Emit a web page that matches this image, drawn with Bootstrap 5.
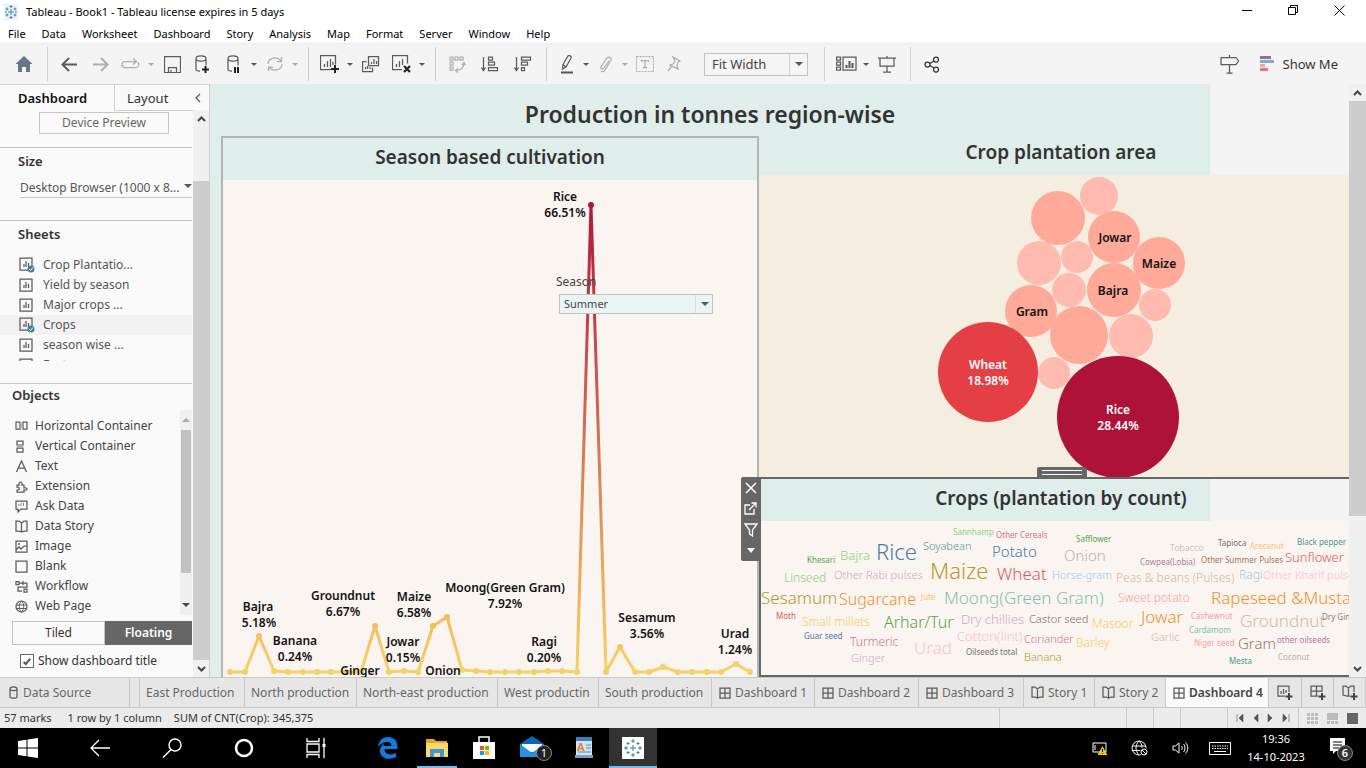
<!DOCTYPE html>
<html lang="en">
<head>
<meta charset="utf-8">
<meta name="viewport" content="width=device-width, initial-scale=1">
<title>Tableau - Book1</title>
<link href="https://cdn.jsdelivr.net/npm/bootstrap@5.3.0/dist/css/bootstrap.min.css" rel="stylesheet">
<style>
body{font-family:"Noto Sans","Open Sans",sans-serif;font-size:12px;line-height:16px;color:#333;background:#fff;overflow:hidden}
body > *{flex-shrink:0}
button{font:inherit;color:inherit;background:none;border:0;padding:0}
svg{display:block;flex:none}
.ln{fill:none;stroke:#5b5b5b;stroke-width:1.25}
.dim{opacity:.45}
.titlebar{height:24px;color:#000;font-size:11px}
.win-btn{width:46px;height:20px;display:grid;place-items:center;margin-bottom:4px}
.menubar{height:19px;font-size:11px;gap:16px;padding-left:8px}
.menubar a{color:#000;text-decoration:none}
/* toolbar */
.toolbar{height:41px;background:#f4f4f4;border-top:1px solid #ececec}
.tgroup{display:flex;align-items:center;gap:7px;height:34px;padding:0 11px 0 9px;border-right:1px solid #cfcfcf}
.tgroup:first-child{padding-left:12px}
.tgroup.last-group{border:0}
.tgroup.wide{gap:9px}
.tgroup button{width:24px;height:24px;display:grid;place-items:center}
.tgroup.snug button{width:22px}
.tgroup button.drop{width:8px;margin:0 -2px 0 -3px}
.drop::before,.arrow::before{content:"";border:3px solid transparent;border-top-color:#555;border-bottom:0}
.arrow::before{border-width:4px 4px 0}
.pick{appearance:none;border:1px solid #c3c3c3;background:#f5f5f5;border-radius:0;color:#444;outline:0}
.arrow{position:absolute;right:0;top:1px;bottom:1px;display:grid;place-items:center;pointer-events:none}
.fit{width:104px;height:23px;font-size:13px;padding:0 7px}
.fit + .arrow{width:19px;border-left:1px solid #d5d5d5}
/* side pane */
main{flex:1 1 0!important;min-height:0}
.side{width:210px;background:#fafafa;border-right:1px solid #cfcfcf;flex:none}
.side .sbar{margin-left:1px}
.side-tabs{height:26px;font-size:13px;border-top:1px solid #d4d4d4}
.side-tabs button{height:26px}
.tab-dash{width:114px;font-weight:600;color:#111;text-align:left}
.side-tabs .tab-dash{padding-left:18px}
.side-tabs .tab-lay{border-left:1px solid #cfcfcf;border-bottom:1px solid #cfcfcf;padding:0 8px 0 12px}
.sec{border-bottom:1px solid #c6c6c6}
.sec-head{font-size:13px;font-weight:600;margin:0;padding-left:18px;line-height:18px}
.size-sec{padding-bottom:22px}
.obj-head{padding:2px 0 6px 12px}
.preview{height:22px;width:130px;margin:2px 0 13px 39px;border:1px solid #c6c6c6;color:#666}
.size-pick{width:100%;height:20px;border:0;border-bottom:1px solid #c6c6c6;background:none;padding:0;color:#555;font-size:12px}
.sheets{height:110px;overflow:hidden;margin-bottom:22px}
.sheets li,.objs li{height:20px;display:flex;align-items:center;color:#555;font-size:12px}
.sheets li{padding-left:19px;gap:8px}
.sheets li.on{background:#f2f2f2}
.objs{height:205px;padding-top:6px}
.objs li{padding-left:15px;gap:6px;color:#444}
.inner-bar{width:12px;background:#f0f0f0}
.inner-thumb{height:143px;width:10px;background:#c1c1c1}
.tri-up{border:4px solid transparent;border-bottom-color:#aaa;border-top:0}
.tri-dn{border:4px solid transparent;border-top-color:#444;border-bottom:0}
.mode{height:24px;padding-left:12px;margin-top:6px}
.mode button:first-child{width:93px;border:1px solid #c3c3c3}
.mode button:last-child{background:#666;color:#fff;font-weight:600}
.tick{appearance:none;width:14px;height:14px;border:1px solid #666;background:#fff;margin:0;display:grid;place-items:center}
.tick:checked::before{content:"";width:4px;height:8px;border:solid #555;border-width:0 2px 2px 0;transform:rotate(40deg)}
.sbar{width:16px;background:#f0f0f0;flex:none}
.stage-bar{width:17px}
.stage-bar .thumb{height:70%}
.side .thumb{margin-top:54px}
.sbar .end{height:17px;display:grid;place-items:center}
.sbar .thumb{background:#cdcdcd}
/* dashboard canvas */
.stage{background:#f4f4f4;min-width:0}
.sheet-back{position:absolute;inset:0 auto 0 0;width:1000px;background:#dfeeea}
.big-title{width:1000px;height:52px;line-height:60px;font-size:23px;font-weight:600;margin:0;text-align:center}
.view-title{font-size:19px;font-weight:600;margin:0;text-align:center;line-height:38px;height:42px}
.left-view{width:538px;margin-left:11px;border:2px solid #aeb7b5;border-bottom:0;flex:none}
.right-col{min-width:0}
.right-in{width:604px}
.area-title{height:39px;line-height:32px}
.area-plot{background:#f6ede1}
.count-view{border:2px solid #666;height:200px}
.plot{background:#faf5f1}
.season{position:absolute;left:333px;top:136px;width:157px}
.season label{color:#444;height:20px}
.season-field{margin-left:3px}
.season-pick{width:154px;height:20px;font-size:11px;padding:0 4px;background:#e9f4f4}
.season .arrow{width:18px;border-left:1px solid #dcdcdc}
.tools{position:absolute;left:531px;top:393px;width:20px;background:#666;border-radius:2px}
.tools button{width:19px;height:21px;display:grid;place-items:center}
.grip{position:absolute;left:276px;bottom:100%;width:50px;height:12px;background:#666;border-radius:2px 2px 0 0;display:grid;place-items:center}
.mk{font-size:12px;font-weight:600;fill:#111;text-anchor:middle}
.cloud text{font-weight:300}
.s13{font-size:13px}
.cloud .s8{font-size:8px;font-weight:400}.s9{font-size:9px}.s11{font-size:11px}.s12{font-size:12px}.s15{font-size:15px}.s16{font-size:16px}.s17{font-size:17px}.s22{font-size:22px}
/* sheet tabs */
.tabs{height:31px;display:grid;grid-template-columns:130fr 10fr 105fr 112fr 141fr 101fr 113fr 103fr 104fr 105fr 71fr 71fr 103fr 33fr 32fr 32fr;background:#e6e6e6;border-top:1px solid #c9c9c9;border-bottom:1px solid #c9c9c9}
.tabs button{border-right:1px solid #c9c9c9;color:#666;white-space:nowrap;display:flex;align-items:center;gap:4px;padding-left:7px;overflow:hidden;min-width:0}
.tabs button.current{background:#fafafa;color:#444;font-weight:600}
.status{height:20px;font-size:11px;background:#ebebeb}
.cell{border-left:1px solid #c9c9c9;height:20px;display:flex;align-items:center;width:27px}
.c-info{width:127px}.c-gap{width:47px}.c-nav{width:71px}.c-view{width:68px}
/* taskbar */
.task{height:40px;background:#000;color:#fff}
.task button{height:40px;display:grid;place-items:center}
.w-start{width:56px;margin-right:8px}
.w-sys{width:72px}
.w-app{width:48px;position:relative;margin-right:1px}
.live::after{content:"";position:absolute;left:4px;right:4px;bottom:0;height:2px;background:#76b9ed}
.task .front{background:#333}
.front::after{left:0;right:0}
.w-tray{width:40px}
.clock{font-size:11px;width:72px;text-align:center;line-height:18px}
</style>
</head>
<body class="d-flex flex-column vh-100">
<header class="titlebar d-flex align-items-center">
  <svg class="ms-1" width="14" height="16" viewBox="0 0 14 16"><path d="M0 0h14v16H0z" fill="#eef2f5"/><path d="M7 5v6M4 8h6M7 1v3M5.500 2.500h3M7 12v3M5.500 13.500h3M1 8h2M11 8h2M3 3.500v3M1.500 5h3M11 3.500v3M9.500 5h3M3 9.500v3M1.500 11h3M11 9.500v3M9.500 11h3" stroke="#3d87b8" fill="none"/></svg>
  <span class="ms-1 ps-1 me-auto">Tableau - Book1 - Tableau license expires in 5 days</span>
  <button class="win-btn" aria-label="Minimize"><svg width="10" height="10"><path d="M0 5.500h10" stroke="#000"/></svg></button>
  <button class="win-btn" aria-label="Restore"><svg width="11" height="11"><path d="M.5 2.500h7v7h-7zM2.500 2.500v-2h7v7h-2" stroke="#000" fill="none"/></svg></button>
  <button class="win-btn me-1" aria-label="Close"><svg width="11" height="11"><path d="M.5.5l10 10M10.500.5l-10 10" stroke="#000"/></svg></button>
</header>
<nav class="menubar d-flex align-items-center">
  <a href="#">File</a><a href="#">Data</a><a href="#">Worksheet</a><a href="#">Dashboard</a><a href="#">Story</a><a href="#">Analysis</a><a href="#">Map</a><a href="#">Format</a><a href="#">Server</a><a href="#">Window</a><a href="#">Help</a>
</nav>
<div class="toolbar d-flex align-items-center" role="toolbar">
  <div class="tgroup"><button aria-label="Home"><svg width="18" height="17"><path d="M9 0l8.500 8H15v8h-4v-5H7v5H3V8H.5z" fill="#67758a"/></svg></button></div>
  <div class="tgroup">
    <button aria-label="Undo"><svg width="17" height="15"><path class="ln" style="stroke-width:2" d="M16 7.500H2M8 1L1.500 7.500 8 14"/></svg></button>
    <button aria-label="Redo" class="dim"><svg width="17" height="15"><path class="ln" style="stroke-width:2" d="M1 7.500h14M9 1l6.500 6.500L9 14"/></svg></button>
    <button aria-label="Replay" class="dim"><svg width="20" height="12"><path class="ln" d="M8 3.500H4a3 3 0 0 0 0 6h11a3 3 0 0 0 2-5M7 3.500h8M12 .5l3.500 3-3.500 3"/></svg></button>
    <button class="drop dim" aria-label="Replay options"></button>
    <button aria-label="Save"><svg width="17" height="17"><path class="ln" d="M.5.5h16v16H.5zM4.500 16v-4.500h8V16M7 16v-2"/></svg></button>
    <button aria-label="New data source"><svg width="18" height="19"><path class="ln" d="M2 3.500c0-3.500 10-3.500 10 0s-10 3.500-10 0v11c0 1 2 1.500 4 1.500M12 3.500v7"/><path d="M11.500 11v7M8 14.500h7" stroke="#222" stroke-width="2"/></svg></button>
    <button aria-label="Pause updates"><svg width="18" height="19"><path class="ln" d="M3 3.500c0-3.500 10-3.500 10 0s-10 3.500-10 0v11c0 1 2 1.500 4 1.500M13 3.500v7"/><path d="M10 12v6M13 12v6" stroke="#222" stroke-width="2"/></svg></button>
    <button class="drop" aria-label="Pause options"></button>
    <button aria-label="Run update" class="dim"><svg width="18" height="16"><path class="ln" d="M2 8a7 6.500 0 0 1 13-3M16 8a7 6.500 0 0 1-13 3M15.500 1v4.500H11M2.500 15v-4H7"/></svg></button>
    <button class="drop dim" aria-label="Update options"></button>
  </div>
  <div class="tgroup">
    <button aria-label="New worksheet"><svg width="20" height="19"><path class="ln" d="M11 14.500H.5V.5h15v9M4.500 12V9M7.500 12V6M10.500 12V4M13 10V7"/><path d="M15 10v8M11 14h8" stroke="#222" stroke-width="2"/></svg></button>
    <button class="drop" aria-label="New options"></button>
    <button aria-label="Duplicate"><svg width="18" height="17"><path class="ln" d="M6.500.5h10v9h-10zM4.500 5.500h-4v10h10v-4M9.500 8V6M12 8V3M14.500 8V5M3.500 13v-2M5.500 13v-3M8 13v-2"/></svg></button>
    <button aria-label="Clear sheet"><svg width="20" height="19"><path class="ln" d="M10 14.500H.5V.5h15v8M4.500 12V9M7.500 12V6M10.500 10V4"/><path d="M12 11l6 6M18 11l-6 6" stroke="#222" stroke-width="2.200"/></svg></button>
    <button class="drop" aria-label="Clear options"></button>
  </div>
  <div class="tgroup wide">
    <button aria-label="Swap" class="dim"><svg width="17" height="17"><path class="ln" d="M1 1h3v3H1zM6 1h3v3H6zM11 1h3v3h-3zM1 6h3v3H1zM1 11h3v3H1zM15 7c0 5-3 7-8 7.500M13 9l2-2.500L16.500 9M9 12.500L6.500 14.500 9 16.500"/></svg></button>
    <button aria-label="Sort ascending"><svg width="18" height="16"><path class="ln" d="M2.500 1v13M.5 11.500l2 3 2-3M7.500 1h4v3h-4zM7.500 6h6v3h-6zM7.500 11.500h9v3h-9z"/></svg></button>
    <button aria-label="Sort descending"><svg width="18" height="16"><path class="ln" d="M2.500 1v13M.5 11.500l2 3 2-3M7.500 1h9v3h-9zM7.500 6h6v3h-6zM7.500 11.500h3v3h-3z"/></svg></button>
  </div>
  <div class="tgroup snug pe-3">
    <button aria-label="Highlight"><svg width="14" height="19"><path class="ln" d="M3 9.500l5-8.500c1-1 4 0 3 2L6 12l-3.500 2zM3 9.500L6 12"/><path d="M1 17.500h12" stroke="#555" stroke-width="2"/></svg></button>
    <button class="drop" aria-label="Highlight options"></button>
    <button aria-label="Group" class="dim"><svg width="14" height="17"><path class="ln" d="M10 5l-5 7c-1 2-4 1-3-1l6-9c2-2 5 0 4 2l-6 10c-1 2-3 2-4 1"/></svg></button>
    <button class="drop dim" aria-label="Group options"></button>
    <button aria-label="Mark labels" class="dim"><svg width="18" height="16"><path class="ln" stroke-dasharray="2 1" d="M.5.5h17v15H.5z"/><path class="ln" d="M5.500 6V4.500h7V6M9 4.500v7M7 11.500h4"/></svg></button>
    <button aria-label="Pin" class="dim"><svg width="15" height="16"><path class="ln" d="M6 1l7 4-2 1-1 4 1 3-8-4 3-1 2-3zM5 10l-4 5"/></svg></button>
    <div class="position-relative ms-2 ps-1"><select class="pick fit" aria-label="Fit"><option>Fit Width</option></select><span class="arrow"></span></div>
  </div>
  <div class="tgroup">
    <button aria-label="Show cards"><svg width="21" height="16"><path class="ln" d="M.5 1h4v3h-4zM.5 6h4v3h-4zM.5 11h4v3h-4zM7 1h13v13H7z"/><path d="M10.500 12V9M13.500 12V5M16.500 12V7" stroke="#555" stroke-width="2"/></svg></button>
    <button class="drop" aria-label="Card options"></button>
    <button aria-label="Presentation"><svg width="18" height="17"><path class="ln" d="M0 2h18M2 2v8h14V2M9 0v2M9 10v6M5 16h8"/></svg></button>
  </div>
  <div class="tgroup last-group"><button aria-label="Share"><svg width="16" height="17"><g class="ln" style="stroke:#333"><circle cx="3.500" cy="8.500" r="2.500"/><circle cx="12" cy="3.500" r="2.500"/><circle cx="12" cy="13.500" r="2.500"/><path d="M6 7.500l4-2.500M6 9.500l4 2.500"/></g></svg></button></div>
  <button class="ms-auto me-3" aria-label="Guide"><svg width="20" height="19"><path class="ln" d="M1 2.500h15l2.500 3.500-2.500 3.500H1zM9.500 0v2.500M9.500 10v8M6.500 18h6"/></svg></button>
  <button class="d-flex align-items-center gap-2 me-4 pe-1 ms-1 s13"><svg width="15" height="16"><path fill="#8b6f9c" d="M0 0h11v3H0z"/><path fill="#86a7cf" d="M0 4h14v3H0z"/><path fill="#f1a883" d="M0 8h5v3H0z"/><path fill="#f56c7c" d="M0 12h8v3H0z"/></svg>Show Me</button>
</div>

<main class="d-flex overflow-hidden">
  <aside class="side d-flex flex-column overflow-hidden">
    <div class="side-tabs d-flex flex-shrink-0"><button class="tab-dash">Dashboard</button><button class="tab-lay flex-grow-1 d-flex align-items-center justify-content-between">Layout<svg width="6" height="10"><path class="ln" d="M5 1L1 5l4 4"/></svg></button></div>
    <div class="d-flex flex-grow-1 overflow-hidden">
      <div class="flex-grow-1">
        <div class="sec"><button class="preview">Device Preview</button></div>
        <div class="sec size-sec">
          <h2 class="sec-head pt-1">Size</h2>
          <div class="position-relative ms-3 mt-1 pt-1 ps-1"><select class="pick size-pick" aria-label="Size"><option>Desktop Browser (1000 x 8...</option></select><span class="arrow"></span></div>
        </div>
        <div class="sec">
          <h2 class="sec-head pt-1 pb-1">Sheets</h2>
          <ul class="sheets list-unstyled mt-1 pt-1">
            <li><svg width="16" height="16"><path class="ln" d="M1 1h12v12H1zM5 10V7M7 10V4M9.500 10V6"/><circle cx="12" cy="12" r="3.500" fill="#3b83a6"/><path d="M10 12l1.500 1.500 2.500-3" stroke="#fff" fill="none"/></svg><span>Crop Plantatio...</span></li>
            <li><svg width="16" height="14"><path class="ln" d="M1 1h12v12H1zM5 10V7M7 10V4M9.500 10V6"/></svg><span>Yield by season</span></li>
            <li><svg width="16" height="14"><path class="ln" d="M1 1h12v12H1zM5 10V7M7 10V4M9.500 10V6"/></svg><span>Major crops ...</span></li>
            <li class="on"><svg width="16" height="16"><path class="ln" d="M1 1h12v12H1zM5 10V7M7 10V4M9.500 10V6"/><circle cx="12" cy="12" r="3.500" fill="#3b83a6"/><path d="M10 12l1.500 1.500 2.500-3" stroke="#fff" fill="none"/></svg><span>Crops</span></li>
            <li><svg width="16" height="14"><path class="ln" d="M1 1h12v12H1zM5 10V7M7 10V4M9.500 10V6"/></svg><span>season wise ...</span></li>
            <li><svg width="16" height="14"><path class="ln" d="M1 1h12v12H1zM5 10V7M7 10V4M9.500 10V6"/></svg><span>East area</span></li>
          </ul>
        </div>
        <h2 class="sec-head obj-head">Objects</h2>
        <div class="d-flex">
          <ul class="objs list-unstyled mb-0 flex-grow-1">
            <li><svg width="14" height="12"><path class="ln" d="M1 2h4v7H1zM8 2h4v7H8z"/><path d="M5 3h3v5H5z" fill="#aaa"/></svg>Horizontal Container</li>
            <li><svg width="14" height="13"><path class="ln" d="M2 1h6v4H2zM2 8h6v4H2z"/><path d="M2 5h6v3H2z" fill="#aaa"/></svg>Vertical Container</li>
            <li><svg width="14" height="13"><path class="ln" d="M1.500 12L6.500 1l5 11M3 8h7"/></svg>Text</li>
            <li><svg width="14" height="13"><path class="ln" d="M2 5h2c-1-4 4-4 3 0h2v3c4-1 4 3 0 2v2H2v-2c3 0 3-3 0-3z"/></svg>Extension</li>
            <li><svg width="14" height="13"><path class="ln" d="M1 1h11v8H6l-3 3V9H1z"/><path d="M4 4v2M6 3v3M8.500 3v3" stroke="#888"/></svg>Ask Data</li>
            <li><svg width="14" height="13"><path class="ln" d="M1 1h3l2.500 2L9 1h3v10H9l-2.500 1L4 11H1zM6.500 3v9"/></svg>Data Story</li>
            <li><svg width="14" height="13"><path class="ln" d="M1 1h11v11H1zM1 10l3-3 2 2 3-3h3"/><circle cx="4" cy="4" r="1" fill="#555"/></svg>Image</li>
            <li><svg width="14" height="13"><path class="ln" d="M1 1h11v11H1z"/></svg>Blank</li>
            <li><svg width="14" height="13"><path class="ln" d="M1 1.500h3v3H1zM4 3h8M8 1v4M12 3v4H3v4h4M9 9h3v3H9z"/></svg>Workflow</li>
            <li><svg width="14" height="13"><circle class="ln" cx="6.500" cy="6.500" r="5.500"/><path class="ln" style="stroke-width:1" d="M1 5h11M1 8.500h11M6.500 1c-3 3-3 8 0 11M6.500 1c3 3 3 8 0 11"/></svg>Web Page</li>
          </ul>
          <div class="inner-bar d-flex flex-column align-items-center"><span class="tri-up my-2"></span><span class="inner-thumb"></span><span class="tri-dn mt-auto mb-2"></span></div>
        </div>
        <div class="mode d-flex"><button>Tiled</button><button class="flex-grow-1">Floating</button></div>
        <div class="d-flex align-items-center ms-3 mt-2 pe-1"><input class="tick ms-1" type="checkbox" id="showtitle" checked><label for="showtitle" class="ms-1 flex-shrink-0">Show dashboard title</label></div>
      </div>
      <div class="sbar d-flex flex-column"><span class="end"><svg width="9" height="6"><path d="M1 5l3.500-3.500L8 5" stroke="#444" stroke-width="2" fill="none"/></svg></span><span class="thumb flex-grow-1"></span><span class="end"><svg width="9" height="6"><path d="M1 1l3.500 3.500L8 1" stroke="#444" stroke-width="2" fill="none"/></svg></span></div>
    </div>
  </aside>

  <section class="stage flex-grow-1 overflow-hidden position-relative">
    <div class="sheet-back"></div>
    <div class="position-relative">
      <h1 class="big-title">Production in tonnes region-wise</h1>
      <div class="d-flex">
        <div class="left-view position-relative">
          <h2 class="view-title">Season based cultivation</h2>
          <svg class="plot" width="534" height="520" viewBox="223 180 534 520" role="img" aria-label="Season based cultivation">
            <defs><linearGradient id="heat" gradientUnits="userSpaceOnUse" x1="0" y1="672" x2="0" y2="205"><stop offset="0" stop-color="#f5d267"/><stop offset=".12" stop-color="#f6b95c"/><stop offset=".4" stop-color="#dc8753"/><stop offset=".6" stop-color="#cc5c50"/><stop offset=".85" stop-color="#bd2f43"/><stop offset="1" stop-color="#b1173c"/></linearGradient></defs>
            <polyline fill="none" stroke="url(#heat)" stroke-width="3" stroke-linejoin="round" points="230,672 245,672 259,636 274,671 288,672 303,672 317,672 331,672 346,672 361,672 375,626 389,672 404,671 418,672 433,626 447,617 462,670 476,671 490,672 505,672 519,672 534,672 548,671 562,671 577,672 591,205 606,672 620,647 635,672 649,672 663,667 678,672 692,672 707,672 721,672 736,664 750,672"/>
            <path fill="none" stroke="url(#heat)" stroke-width="6" stroke-linecap="round" d="M230 672h.01M245 672h.01M259 636h.01M274 671h.01M288 672h.01M303 672h.01M317 672h.01M331 672h.01M346 672h.01M361 672h.01M375 626h.01M389 672h.01M404 671h.01M418 672h.01M433 626h.01M447 617h.01M462 670h.01M476 671h.01M490 672h.01M505 672h.01M519 672h.01M534 672h.01M548 671h.01M562 671h.01M577 672h.01M591 205h.01M606 672h.01M620 647h.01M635 672h.01M649 672h.01M663 667h.01M678 672h.01M692 672h.01M707 672h.01M721 672h.01M736 664h.01M750 672h.01"/>
            <g class="mk">
              <text x="565" y="201">Rice</text><text x="565" y="217">66.51%</text>
              <text x="258" y="611">Bajra</text><text x="259" y="627">5.18%</text>
              <text x="295" y="645">Banana</text><text x="295" y="661">0.24%</text>
              <text x="343" y="600">Groundnut</text><text x="343" y="616">6.67%</text>
              <text x="360" y="675">Ginger</text>
              <text x="403" y="646">Jowar</text><text x="403" y="662">0.15%</text>
              <text x="414" y="601">Maize</text><text x="414" y="617">6.58%</text>
              <text x="443" y="675">Onion</text>
              <text x="505" y="592">Moong(Green Gram)</text><text x="505" y="608">7.92%</text>
              <text x="544" y="646">Ragi</text><text x="544" y="662">0.20%</text>
              <text x="647" y="622">Sesamum</text><text x="647" y="638">3.56%</text>
              <text x="735" y="638">Urad</text><text x="735" y="654">1.24%</text>
            </g>
          </svg>
          <div class="season">
            <label for="season" class="d-block">Season</label>
            <div class="season-field position-relative d-inline-block"><select id="season" class="pick season-pick"><option>Summer</option></select><span class="arrow"></span></div>
          </div>
        </div>
        <div class="right-col flex-grow-1 overflow-hidden">
          <div class="right-in">
            <h2 class="view-title area-title">Crop plantation area</h2>
            <svg class="area-plot" width="604" height="302" viewBox="759 175 604 302" role="img" aria-label="Crop plantation area">
              <g fill="#ffa998"><circle cx="1058" cy="218" r="27"/><circle cx="1114" cy="237" r="26"/><circle cx="1159" cy="263" r="26"/><circle cx="1114" cy="290" r="27"/><circle cx="1031" cy="311" r="26"/><circle cx="1079" cy="335" r="29"/></g>
              <g fill="#ffbbb0"><circle cx="1099" cy="196" r="19"/><circle cx="1039" cy="263" r="22"/><circle cx="1077" cy="257" r="16"/><circle cx="1069" cy="290" r="17"/><circle cx="1155" cy="305" r="16"/><circle cx="1131" cy="336" r="22"/><circle cx="1054" cy="373" r="16"/></g>
              <circle cx="988" cy="372" r="50" fill="#e43f45"/><circle cx="1118" cy="417" r="61" fill="#ae1238"/>
              <g class="mk"><text x="1115" y="242">Jowar</text><text x="1159" y="268">Maize</text><text x="1113" y="295">Bajra</text><text x="1032" y="316">Gram</text></g>
              <g class="mk" style="fill:#fff"><text x="988" y="369">Wheat</text><text x="988" y="385">18.98%</text><text x="1118" y="414">Rice</text><text x="1118" y="430">28.44%</text></g>
            </svg>
            <div class="count-view position-relative">
              <div class="grip"><svg width="40" height="6"><path d="M0 .5h40M0 4.500h40" stroke="#fff"/></svg></div>
              <h2 class="view-title">Crops (plantation by count)</h2>
              <svg class="plot cloud" width="600" height="154" viewBox="761 521 600 154" role="img" aria-label="Crops by count"></svg>
            </div>
          </div>
        </div>
      </div>
    </div>
    <div class="tools">
      <button aria-label="Remove"><svg width="12" height="12"><path d="M1 1l10 10M11 1L1 11" stroke="#fff" stroke-width="1.500"/></svg></button>
      <button aria-label="Go to sheet"><svg width="13" height="13"><path d="M6 3H1v9h9V7M5 8l6-6M7.500 1H12v4.500" stroke="#fff" fill="none" stroke-width="1.300"/></svg></button>
      <button aria-label="Use as filter"><svg width="14" height="14"><path d="M1 1h12L8.500 7v6l-3-2V7z" stroke="#fff" fill="none" stroke-width="1.300"/></svg></button>
      <button aria-label="More"><svg width="8" height="5"><path d="M0 0h8L4 5z" fill="#fff"/></svg></button>
    </div>
  </section>
  <div class="sbar stage-bar d-flex flex-column"><span class="end"><svg width="9" height="6"><path d="M1 5l3.500-3.500L8 5" stroke="#444" stroke-width="2" fill="none"/></svg></span><span class="thumb"></span><span class="end mt-auto"><svg width="9" height="6"><path d="M1 1l3.500 3.500L8 1" stroke="#444" stroke-width="2" fill="none"/></svg></span></div>
</main>
<div class="tabs"></div>
<footer class="status d-flex"></footer>
<div class="task d-flex"></div>
<script>
/* crop, x, baseline, size step, colour */
const crops=[["Sannhamp",953,535,8,"#8cd17d"],["Other Cereals",996,538,8,"#d37295"],["Soyabean",923,550,11,"#499894"],["Potato",992,557,15,"#4e79a7"],["Rice",876,560,22,"#4e79a7"],["Bajra",840,560,13,"#8cd17d"],["Khesari",807,563,8,"#59a14f"],["Linseed",784,582,12,"#8cd17d"],["Other Rabi pulses",834,579,11,"#d4a6c8"],["Maize",930,579,22,"#b6992d"],["Wheat",997,580,17,"#e15759"],["Horse-gram",1052,579,11,"#a0cbe8"],["Peas & beans (Pulses)",1116,582,12,"#d7b5a6"],["Ragi",1239,579,12,"#a0cbe8"],["Other Kharif pulses",1263,579,11,"#fabfd2"],["Onion",1064,561,15,"#bab0ac"],["Safflower",1076,542,8,"#59a14f"],["Tobacco",1170,551,9,"#bab0ac"],["Tapioca",1218,546,8,"#79706e"],["Arecanut",1250,549,8,"#ffbe7d"],["Black pepper",1297,545,8,"#499894"],["Cowpea(Lobia)",1140,565,8,"#b07aa1"],["Other Summer Pulses",1201,563,8,"#9d7660"],["Sunflower",1285,562,13,"#e15759"],["Sesamum",761,604,17,"#b6992d"],["Sugarcane",839,605,16,"#f28e2b"],["Jute",921,600,8,"#ffbe7d"],["Moong(Green Gram)",944,604,17,"#86bcb6"],["Sweet potato",1118,602,12,"#ff9d9a"],["Rapeseed &Mustard",1211,604,17,"#f28e2b"],["Moth",776,619,8,"#e15759"],["Small millets",802,626,12,"#f1ce63"],["Arhar/Tur",884,628,16,"#59a14f"],["Dry chillies",961,624,13,"#d4a6c8"],["Castor seed",1029,623,11,"#79706e"],["Masoor",1092,628,12,"#f1ce63"],["Jowar",1141,623,17,"#f28e2b"],["Cashewnut",1191,619,8,"#ff9d9a"],["Groundnut",1240,627,17,"#d7b5a6"],["Dry Ginger",1322,620,8,"#9d7660"],["Guar seed",804,639,8,"#4e79a7"],["Turmeric",850,646,12,"#d37295"],["Urad",914,654,17,"#fabfd2"],["Cotton(lint)",957,641,13,"#fabfd2"],["Coriander",1024,643,11,"#d37295"],["Barley",1076,647,12,"#f1ce63"],["Garlic",1151,641,11,"#d7b5a6"],["Cardamom",1189,633,8,"#86bcb6"],["Niger seed",1194,646,8,"#ff9d9a"],["Gram",1238,649,15,"#9d7660"],["other oilseeds",1277,643,8,"#b07aa1"],["Coconut",1278,660,8,"#bab0ac"],["Mesta",1229,664,8,"#499894"],["Ginger",851,662,11,"#d4a6c8"],["Oilseeds total",966,655,8,"#79706e"],["Banana",1024,661,11,"#b6992d"]];
document.querySelector('.cloud').innerHTML=crops.map(([t,x,y,s,c])=>`<text x="${x}" y="${y}" class="s${s}" fill="${c}">${t.replace('&','&amp;')}</text>`).join('');
const gridIcon='<svg width="12" height="12"><path class="ln" d="M1 1h10v10H1zM6 1v10M1 6h10"/></svg>';
const bookIcon='<svg width="13" height="13"><path class="ln" d="M1 1h3l2.500 2L9 1h3v10H9l-2.500 1L4 11H1zM6.500 3v9"/></svg>';
const plus='<path d="M12 8v7M8.500 11.500h7" stroke="#444" stroke-width="2"/>';
document.querySelector('.tabs').innerHTML=
'<button class="ps-2"><svg width="11" height="13"><path class="ln" d="M2 3c0-3 7-3 7 0v8c0 1.500-7 1.500-7 0zM2 3c0 2 7 2 7 0"/></svg>Data Source</button><button aria-hidden="true" tabindex="-1"></button>'
+['East Production','North production','North-east production','West productin','South production'].map(t=>`<button style="padding-left:6px">${t}</button>`).join('')
+[1,2,3].map(n=>`<button>${gridIcon}Dashboard ${n}</button>`).join('')
+[1,2].map(n=>`<button>${bookIcon}Story ${n}</button>`).join('')
+`<button class="current">${gridIcon}Dashboard 4</button>`
+`<button class="ps-2" aria-label="New worksheet"><svg width="16" height="16"><path class="ln" d="M8 11H1V1h11v6M4 9V6M6.500 9V4M9 8V5"/>${plus}</svg></button>`
+`<button class="ps-2" aria-label="New dashboard"><svg width="16" height="16"><path class="ln" d="M8 11H1V1h11v6M6.500 1v10M1 6h11"/>${plus}</svg></button>`
+`<button class="ps-2" aria-label="New story"><svg width="16" height="16"><path class="ln" d="M8 11H5L1 10V1h3l2.500 2L9 1h3v6M6.500 3v8"/>${plus}</svg></button>`;
document.querySelector('.status').innerHTML=
'<span class="align-self-center px-1">57 marks</span><span class="align-self-center ms-2 ps-1">1 row by 1 column</span><span class="align-self-center ms-2 ps-1 me-auto">SUM of CNT(Crop): 345,375</span>'
+'<span class="cell c-info"></span><span class="cell"></span><span class="cell"></span><span class="cell c-gap"></span>'
+'<span class="cell c-nav justify-content-around px-1">'
+[['First','M1 0v8M7 0L3 4l4 4z'],['Previous','M7 0L3 4l4 4z'],['Next','M1 0l4 4-4 4z'],['Last','M1 0l4 4-4 4zM7 0v8']].map(([l,d])=>`<button aria-label="${l}"><svg width="8" height="8"><path d="${d}" fill="#555" stroke="#555" stroke-width=".6"/></svg></button>`).join('')
+'</span><span class="cell c-view justify-content-around px-1">'
+'<button aria-label="Grid"><svg width="11" height="11"><path d="M0 1.500h11M0 5.500h11M0 9.500h11" stroke="#bbb" stroke-width="3" stroke-dasharray="3 1"/></svg></button>'
+'<button aria-label="Filmstrip"><svg width="11" height="11"><path d="M0 0h11v7H0z" fill="#bbb"/><path d="M0 9.500h11" stroke="#bbb" stroke-width="3" stroke-dasharray="3 1"/></svg></button>'
+'<button aria-label="Single"><svg width="11" height="11"><path d="M0 0h11v11H0z" fill="#666"/></svg></button></span>';
document.querySelector('.task').innerHTML=
'<button class="w-start" aria-label="Start"><svg width="20" height="20"><path fill="#fff" d="M0 3l8.500-1.200v7.700H0zM9.500 1.600L20 0v9.500H9.500zM0 10.500h8.500v7.700L0 17zM9.500 10.500H20V20L9.500 18.400z"/></svg></button>'
+'<button class="w-sys" aria-label="Back"><svg width="20" height="18"><path d="M20 9H1M9 1L1 9l8 8" stroke="#fff" fill="none" stroke-width="1.300"/></svg></button>'
+'<button class="w-sys" aria-label="Search"><svg width="20" height="20"><circle cx="13" cy="7" r="6" stroke="#fff" fill="none" stroke-width="1.400"/><path d="M9 11.500L1 19.500" stroke="#fff" stroke-width="1.400"/></svg></button>'
+'<button class="w-sys" aria-label="Cortana"><svg width="20" height="20"><circle cx="10" cy="10" r="8" stroke="#fff" fill="none" stroke-width="2.500"/></svg></button>'
+'<button class="w-sys" aria-label="Task view"><svg width="20" height="20"><path d="M1 0v3.500h12V0M1 20v-3.500h12V20M1 6h12v8H1zM18 0v20" stroke="#fff" fill="none" stroke-width="1.300"/><path d="M16.500 6h3v3h-3z" fill="#fff"/></svg></button><span class="ms-2 ps-1"></span>'
+'<button class="w-app" aria-label="Edge"><svg width="20" height="22"><path d="M0 10C1 3 5 0 10 0c7 0 10 5 9.500 12H6.500c0 6 7 6.500 11.500 4v4c-8 4-16 1-16-6 0-4 2-6 5-8-1 1-1.500 2-1.500 3h8C13.500 3 4 4 0 10z" fill="#0f7bdc"/></svg></button>'
+'<button class="w-app live" aria-label="File Explorer"><svg width="22" height="19"><path d="M0 0h8l2 2h11v16H0z" fill="#e5a91c"/><path d="M0 4h22v14H0z" fill="#ffd968"/><path d="M4 18v-8h14v8h-4v-4H8v4z" fill="#3f96d9"/></svg></button>'
+'<button class="w-app" aria-label="Store"><svg width="26" height="24"><path d="M6 7V1h10v6" stroke="#fff" stroke-width="1.500" fill="none"/><path d="M0 6h22v17H0z" fill="#fff"/><path d="M7 10h4v4H7z" fill="#f25022"/><path d="M12 10h4v4h-4z" fill="#7fba00"/><path d="M7 15h4v4H7z" fill="#00a4ef"/><path d="M12 15h4v4h-4z" fill="#ffb900"/></svg></button>'
+'<button class="w-app" aria-label="Mail"><svg width="34" height="28"><path d="M2 10L14 2l12 8v13H2z" fill="#0b67b4"/><path d="M4 10h20v8H4z" fill="#f4f8fc"/><path d="M2 10l12 9 12-9v13H2z" fill="#2494e0"/><circle cx="26" cy="19" r="7.500" fill="#222" stroke="#888"/><text x="26" y="23" fill="#fff" font-size="11" text-anchor="middle">1</text></svg></button>'
+'<button class="w-app" aria-label="WordPad"><svg width="18" height="22"><path d="M1 0h16v20H1z" fill="#cfe4f6"/><path d="M1 0h16v4H1z" fill="#3e7fb8"/><path d="M0 18h18v3H0z" fill="#7f9fc0"/><path d="M11 8h5M11 11h5M3 15h13" stroke="#5c86b0"/><text x="2" y="14" fill="#ef7a1a" font-size="11" font-weight="700">A</text></svg></button>'
+'<button class="w-app live front" aria-label="Tableau"><svg width="22" height="22"><path d="M0 0h22v22H0z" fill="#fff"/><path d="M11 8v6M8 11h6M11 2v4M9 4h4M11 16v4M9 18h4M2 11h4M4 9v4M16 11h4M18 9v4M6 5v3M4.500 6.500h3M16 5v3M14.500 6.500h3M6 14v3M4.500 15.500h3M16 14v3M14.500 15.500h3" stroke="#3d7fa8" fill="none"/></svg></button>'
+'<button class="w-tray ms-auto" aria-label="Battery"><svg width="16" height="16"><path d="M1 3h13v9H1z" stroke="#fff" fill="none"/><path d="M3 5v5" stroke="#fff"/><path d="M10.500 6l5 9h-10z" fill="#ffc20e"/><path d="M10.500 9v3M10.500 13v1" stroke="#000"/></svg></button>'
+'<button class="w-tray" aria-label="Network"><svg width="18" height="17"><circle cx="8" cy="8" r="7" stroke="#fff" fill="none"/><path d="M1 6h14M1 10.500h9M8 1c-4 4-4 10 0 14M8 1c3 3 3 5 3 7" stroke="#fff" fill="none"/><circle cx="13" cy="12" r="4" fill="#000"/><circle cx="13" cy="12" r="3" stroke="#fff" fill="none"/><path d="M11 10l4 4" stroke="#fff"/></svg></button>'
+'<button class="w-tray" aria-label="Volume"><svg width="17" height="14"><path d="M1 5h2.500L7 2v10L3.500 9H1zM9.500 5c1 1.500 1 3 0 4M11.500 3c2 2.500 2 5.500 0 8M13.500 1.500c3 3 3 8 0 11" stroke="#fff" fill="none"/></svg></button>'
+'<button class="w-tray" aria-label="Keyboard"><svg width="22" height="13"><path d="M.5.5h21v12H.5z" stroke="#fff" fill="none"/><path d="M3 4h16M3 6.500h16" stroke="#fff" stroke-dasharray="1.500 1"/><path d="M5 9.500h12" stroke="#fff"/></svg></button>'
+'<div class="clock align-self-center">19:36<br>14-10-2023</div>'
+'<button class="ms-3 me-2" aria-label="Notifications"><svg width="30" height="28"><path d="M2 4h15v13H8l-3 3v-3H2z" fill="#fff"/><path d="M5 8h9M5 11h9M5 14h6" stroke="#000"/><circle cx="17" cy="19" r="7.500" fill="#333" stroke="#888"/><text x="17" y="23" fill="#fff" font-size="11" font-weight="600" text-anchor="middle">6</text></svg></button>';
</script>
<script src="https://cdn.jsdelivr.net/npm/bootstrap@5.3.0/dist/js/bootstrap.bundle.min.js"></script>
</body>
</html>
